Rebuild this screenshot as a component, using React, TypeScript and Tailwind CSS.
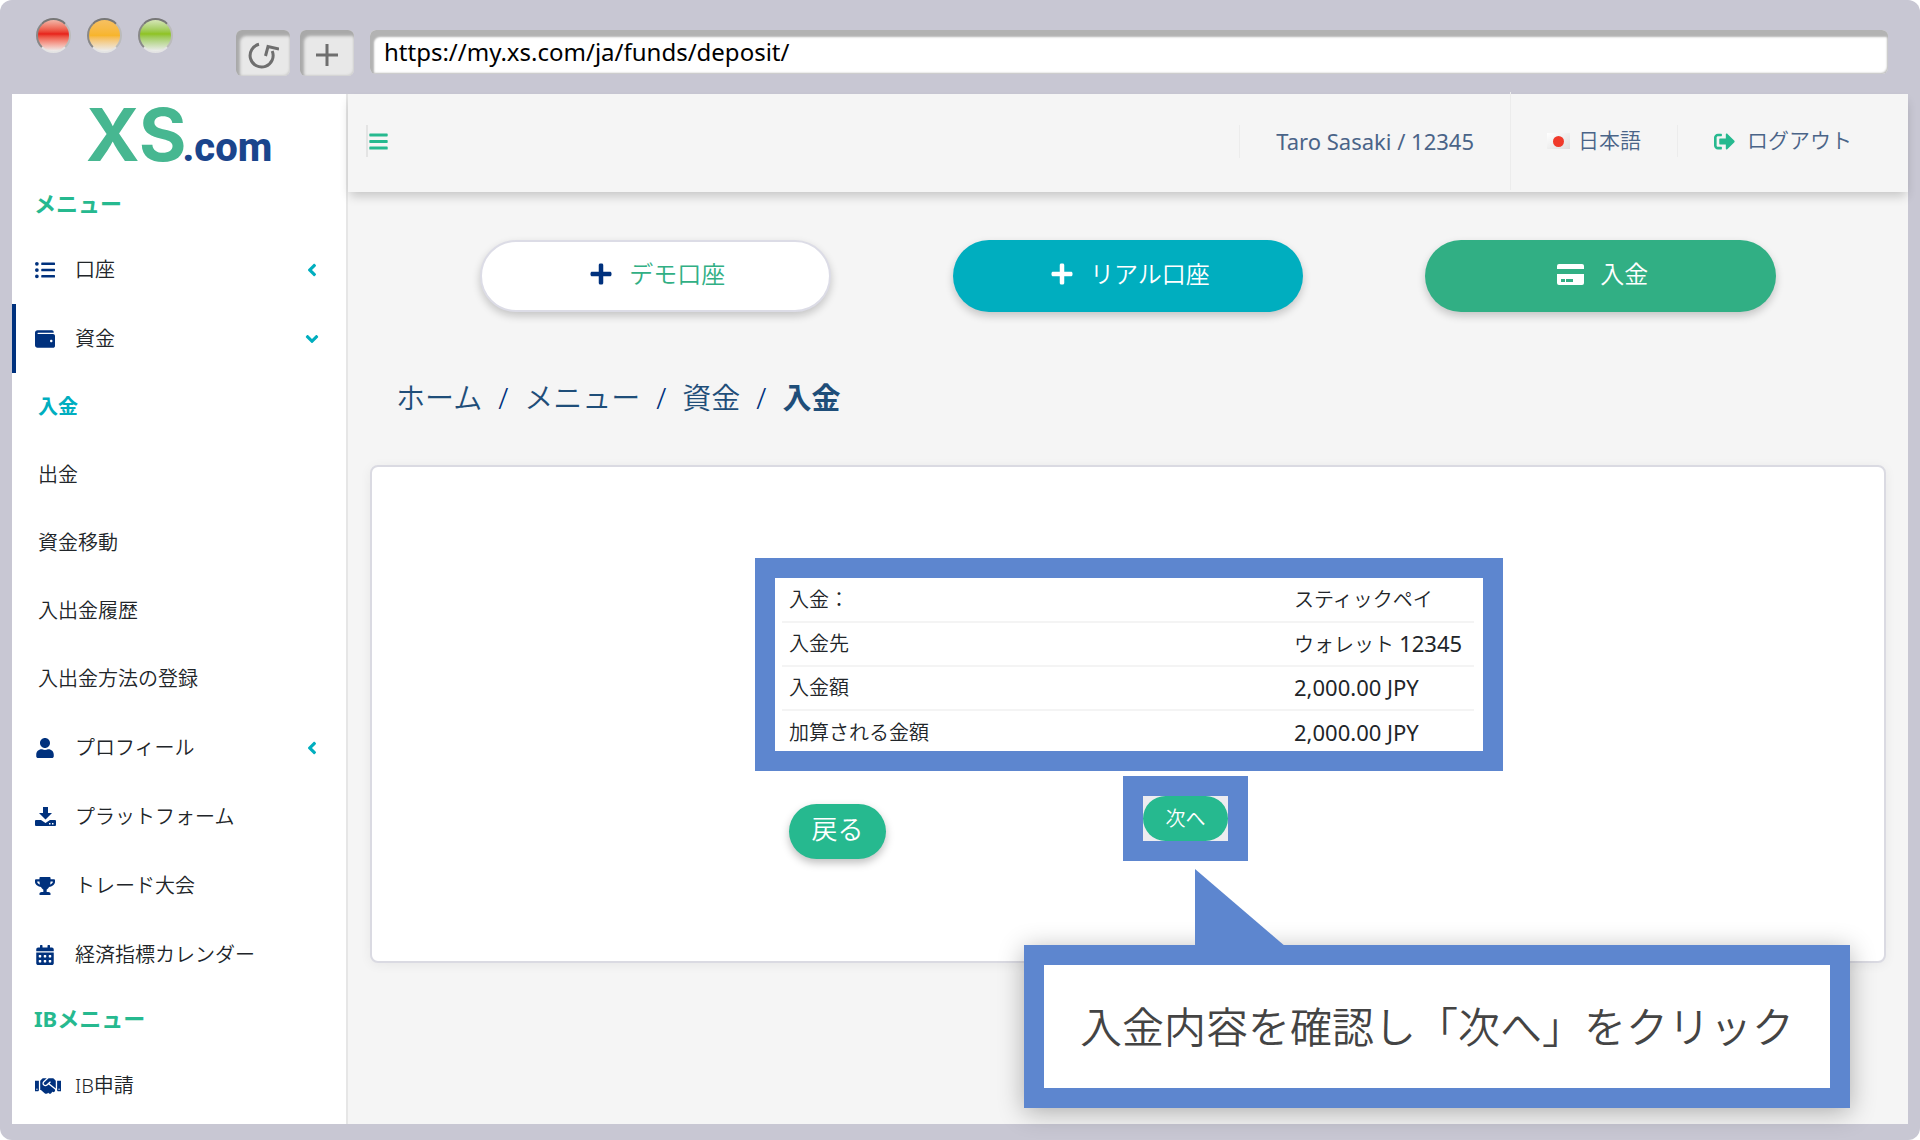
import { useState } from "react";
import type { ReactNode } from "react";
import {
  FaBars,
  FaCalendarAlt,
  FaHandshake,
  FaListUl,
  FaPlus,
  FaSignOutAlt,
  FaTrophy,
  FaUser,
  FaWallet,
  FaAngleDown,
  FaAngleLeft,
} from "react-icons/fa";

const fundLinks = ["入金", "出金", "資金移動", "入出金履歴", "入出金方法の登録"];

const rows = [
  { name: "入金：", text: "スティックペイ" },
  { name: "入金先", text: "ウォレット ", amount: "12345" },
  { name: "入金額", amount: "2,000.00 JPY" },
  { name: "加算される金額", amount: "2,000.00 JPY" },
];

function DownloadIcon() {
  return (
    <svg viewBox="0 0 21 19" width="21" height="19" fill="currentColor">
      <path d="M8 0h5v6h4l-6.500 6.500L4 6h4z" />
      <path
        fillRule="evenodd"
        d="M1 13h5l4.500 3 4.500-3h5a1 1 0 0 1 1 1v4a1 1 0 0 1-1 1H1a1 1 0 0 1-1-1v-4a1 1 0 0 1 1-1zM14 16h1.500v1.500H14zM17 16h1.500v1.500H17z"
      />
    </svg>
  );
}

function CardIcon() {
  return (
    <svg viewBox="0 0 27 21" width="27" height="21" fill="currentColor">
      <path d="M0 5V2a2 2 0 0 1 2-2h23a2 2 0 0 1 2 2v3z" />
      <path
        fillRule="evenodd"
        d="M0 10h27v9a2 2 0 0 1-2 2H2a2 2 0 0 1-2-2zM4 15v3h4v-3zM9 15v3h7v-3z"
      />
    </svg>
  );
}

function BrowserBar() {
  const [url, setUrl] = useState("https://my.xs.com/ja/funds/deposit/");
  const tool =
    "flex h-[46px] w-[54px] items-center justify-center rounded-md bg-[#e8e8e8] pt-1 text-[#6e6e6e] shadow-[inset_4px_6px_3px_#a9a9a9,inset_-1px_-1px_2px_#cfcfcf]";
  const light =
    "size-[35px] rounded-full border-2 border-t-[#777] border-l-[#888] border-r-[#bbb] border-b-[#e4e4e4]";
  return (
    <div className="flex h-[94px] items-start pr-5 pl-6">
      <div className="flex gap-4 pt-[18px]">
        <span className={`${light} bg-linear-to-b from-[#f0b5a8] via-[#e71f19] via-45% to-[#ececec]`} />
        <span className={`${light} bg-linear-to-b from-[#f7c060] via-[#f7b52c] via-50% to-[#ececec]`} />
        <span className={`${light} bg-linear-to-b from-[#d5e5b5] via-[#8fc31f] via-45% to-[#ececec]`} />
      </div>
      <div className="flex flex-1 gap-[10px] pt-[30px] pl-[63px]">
        <button type="button" aria-label="再読み込み" className={tool}>
          <svg viewBox="0 0 32 27" width="32" height="27" fill="none" stroke="currentColor" strokeWidth="3">
            <path d="M12 2.300A11.500 11.500 0 1 0 25.200 9" />
            <path d="M18.500 14l2.500-9.500L32 7" />
          </svg>
        </button>
        <button type="button" aria-label="新しいタブ" className={tool}>
          <svg viewBox="0 0 22 22" width="22" height="22" stroke="currentColor" strokeWidth="3">
            <path d="M11 0v22M0 11h22" />
          </svg>
        </button>
        <input
          aria-label="アドレス"
          value={url}
          onChange={(e) => setUrl(e.target.value)}
          className="ml-[6px] h-11 min-w-0 flex-1 rounded-md bg-white pb-[2px] pl-[14px] text-2xl font-normal text-black shadow-[inset_4px_7px_2px_#b3b3b3,inset_-1px_-1px_2px_#bbb] outline-none"
        />
      </div>
    </div>
  );
}

function MenuItem({
  icon,
  label,
  open,
  active,
}: {
  icon: ReactNode;
  label: string;
  open?: boolean;
  active?: boolean;
}) {
  return (
    <a
      href="#"
      className={`flex h-[69px] items-center border-l-4 pr-6 pl-[19px] ${active ? "border-[#00317d]" : "border-transparent"}`}
    >
      <span className="w-10 text-xl text-[#00317d]">{icon}</span>
      <span className="flex-1">{label}</span>
      {open === false && <FaAngleLeft className="text-[#00aebf]" />}
      {open && <FaAngleDown className="text-[#00aebf]" />}
    </a>
  );
}

function Sidebar() {
  return (
    <nav className="w-[336px] shrink-0 border-r-2 border-[#e6e6e6] bg-white text-xl text-[#212529]">
      <a href="#" aria-label="XS.com" className="flex h-[93px] items-baseline justify-center">
        <span className="font-[Inter] text-[73px] leading-[82px] font-bold text-[#47b791]">XS</span>
        <span className="-ml-1 font-[Roboto] text-[40px] font-extrabold text-[#1a458c]">.com</span>
      </a>
      <h2 className="h-12 pl-[22px] text-[22px] leading-8 font-bold text-[#26b98f]">メニュー</h2>
      <MenuItem icon={<FaListUl />} label="口座" open={false} />
      <MenuItem icon={<FaWallet />} label="資金" open active />
      <ul>
        {fundLinks.map((label, i) => (
          <li key={label}>
            <a
              href="#"
              className={`flex h-[68px] items-center pl-[26px] ${i === 0 ? "font-bold text-[#00aebf]" : ""}`}
            >
              {label}
            </a>
          </li>
        ))}
      </ul>
      <MenuItem icon={<FaUser />} label="プロフィール" open={false} />
      <MenuItem icon={<DownloadIcon />} label="プラットフォーム" />
      <MenuItem icon={<FaTrophy />} label="トレード大会" />
      <MenuItem icon={<FaCalendarAlt />} label="経済指標カレンダー" />
      <h2 className="h-[62px] pl-[22px] text-[22px] leading-[58px] font-bold text-[#26b98f]">IBメニュー</h2>
      <MenuItem icon={<FaHandshake className="text-[26px]" />} label="IB申請" />
    </nav>
  );
}

function Header() {
  return (
    <header className="flex h-[98px] items-center bg-[#f5f5f5] pr-14 pb-1 pl-[18px] text-[21px] text-[#4a6488] shadow-[0_6px_10px_-2px_rgba(0,0,0,0.200)]">
      <button type="button" aria-label="メニューを開く" className="flex h-8 items-center border-l-2 border-[#e4e4e4] text-[#26b98f]">
        <FaBars />
      </button>
      <span className="ml-auto border-l border-[#ececec] px-9 text-[22px] font-normal">Taro Sasaki / 12345</span>
      <a href="#" className="flex h-[98px] items-center gap-2 border-l border-[#ececec] px-9">
        <span className="flex h-4 w-[23px] items-center justify-center bg-linear-to-br from-white to-[#dedede]">
          <span className="size-[11px] rounded-full bg-[#f03a2a]" />
        </span>
        日本語
      </a>
      <a href="#" className="flex items-center gap-3 border-l border-[#ececec] pl-9">
        <FaSignOutAlt className="text-[#26b98f]" />
        ログアウト
      </a>
    </header>
  );
}

function DepositCard() {
  return (
    <section className="mx-[22px] h-[498px] rounded-lg border-2 border-[#dadae2] bg-white pt-[91px] pl-[2px] shadow-[0_2px_12px_rgba(0,0,0,0.060)]">
      <div className="mx-auto w-[748px]">
        <div className="h-[213px] overflow-hidden border-20 border-[#5d86cf] pr-[9px] pl-[7px]">
          <table className="w-full text-left text-xl leading-[30px] text-[#212529]">
            <tbody>
              {rows.map(({ name, text, amount }) => (
                <tr key={name} className="h-[44px] border-b-2 border-[#f4f4f4] last:border-0">
                  <th scope="row" className="pl-[7px] font-[350]">{name}</th>
                  <td className="w-[180px] whitespace-nowrap">
                    {text}
                    {amount && <span className="text-[22px] font-normal">{amount}</span>}
                  </td>
                </tr>
              ))}
            </tbody>
          </table>
        </div>
        <div className="flex items-start pt-[5px]">
          <div className="w-[368px] pt-7 pl-[34px]">
            <button
              type="button"
              className="h-[55px] w-[97px] rounded-full bg-[#26b98f] pb-1 text-[26px] text-white shadow-[0_4px_8px_rgba(0,0,0,0.250)]"
            >
              戻る
            </button>
          </div>
          <div className="border-20 border-[#5d86cf] bg-[#ececf0]">
            <button
              type="button"
              className="block h-[45px] w-[85px] rounded-full bg-[#26b98f] text-xl text-white"
            >
              次へ
            </button>
          </div>
        </div>
      </div>
    </section>
  );
}

function Callout() {
  return (
    <div className="absolute right-[58px] bottom-4 flex h-[163px] w-[826px] items-center justify-center border-20 border-[#5d86cf] bg-white text-[42px] text-[#444] shadow-[0_4px_24px_rgba(0,0,0,0.300)]">
      <svg
        viewBox="0 0 91 78"
        width="91"
        height="78"
        className="absolute -top-[96px] left-[151px]"
      >
        <path d="M0 0v78h91z" fill="#5d86cf" />
      </svg>
      入金内容を確認し「次へ」をクリック
    </div>
  );
}

export default function App() {
  const pill =
    "flex h-[72px] items-center justify-center gap-4 rounded-full pb-1 pl-1 text-2xl shadow-[0_4px_8px_rgba(0,0,0,0.200)]";
  return (
    <div className="bg-white">
      <div
        lang="ja"
        className="flex min-h-screen flex-col rounded-xl bg-[#c8c7d3] px-3 pb-4 font-['Noto_Sans','Noto_Sans_CJK_JP',sans-serif] font-[350]"
      >
        <BrowserBar />
        <div className="flex flex-1">
          <Sidebar />
          <main className="relative min-w-0 flex-1 bg-[#f5f5f5]">
            <Header />
            <div className="grid grid-cols-3 gap-[122px] px-[132px] pt-12">
              <button type="button" className={`${pill} border-2 border-[#dcdce6] bg-white text-[#31af84]`}>
                <FaPlus className="text-[#00317d]" />
                デモ口座
              </button>
              <button type="button" className={`${pill} bg-[#00aebf] text-white`}>
                <FaPlus />
                リアル口座
              </button>
              <button type="button" className={`${pill} bg-[#31af84] text-white`}>
                <CardIcon />
                入金
              </button>
            </div>
            <ol className="flex gap-4 pt-16 pb-[45px] pl-12 text-[29px] leading-[44px] text-[#1f4e79]">
              <li><a href="#">ホーム</a></li>
              <li className="text-[#00317d]">/</li>
              <li><a href="#">メニュー</a></li>
              <li className="text-[#00317d]">/</li>
              <li><a href="#">資金</a></li>
              <li className="text-[#00317d]">/</li>
              <li className="font-bold">入金</li>
            </ol>
            <DepositCard />
            <Callout />
          </main>
        </div>
      </div>
    </div>
  );
}
